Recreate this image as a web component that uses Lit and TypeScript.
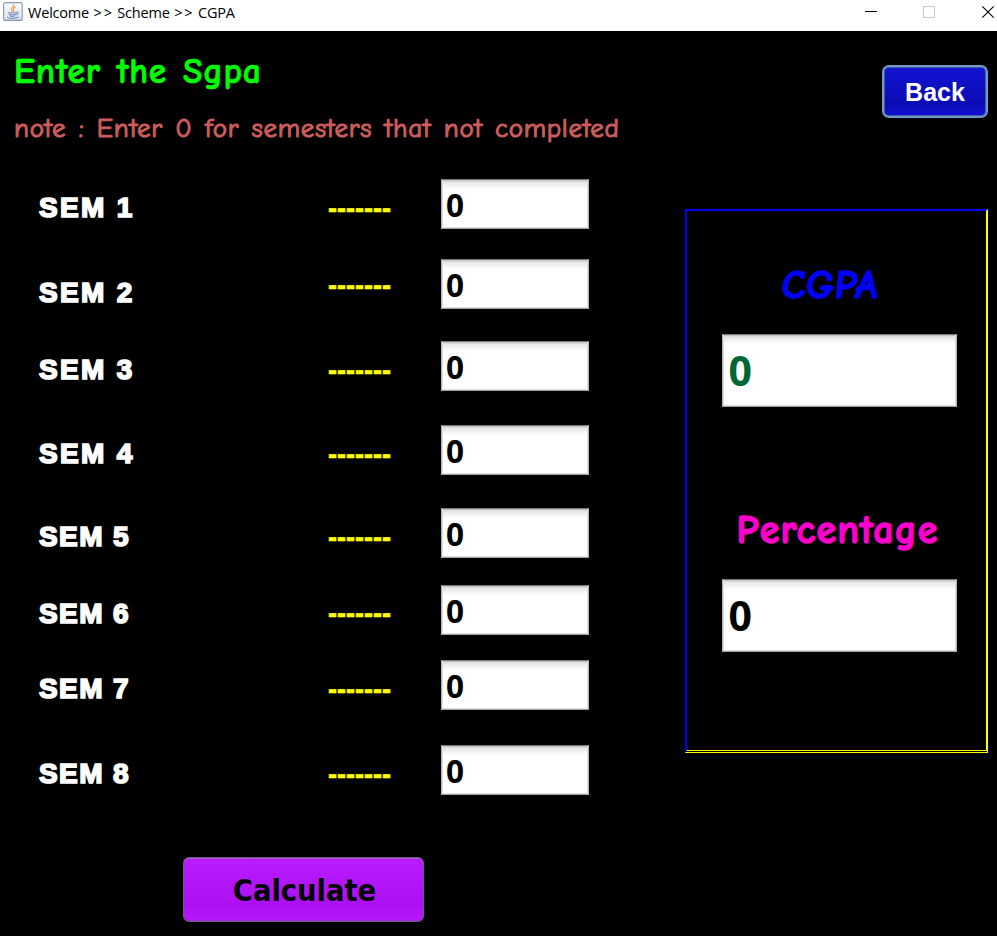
import { LitElement, html, css } from "lit";
import { customElement, property } from "lit/decorators.js";
import { styleMap } from "lit/directives/style-map.js";

interface SemesterRow {
  name: string;
  value: string;
  // Space above the row, then the drop of the label and the dashes within it.
  gap: number;
  label: number;
  dash: number;
  // Letter spacing of the label.
  tracking: number;
}

const ROWS: SemesterRow[] = [
  { name: "SEM 1", value: "0", gap: 0, label: 4, dash: 5, tracking: 2.3 },
  { name: "SEM 2", value: "0", gap: 30, label: 9, dash: 2, tracking: 2.3 },
  { name: "SEM 3", value: "0", gap: 32, label: 4, dash: 5, tracking: 2.3 },
  { name: "SEM 4", value: "0", gap: 34, label: 4, dash: 5, tracking: 2.3 },
  { name: "SEM 5", value: "0", gap: 33, label: 4, dash: 5, tracking: 1.4 },
  { name: "SEM 6", value: "0", gap: 27, label: 4, dash: 4, tracking: 1.4 },
  { name: "SEM 7", value: "0", gap: 25, label: 4, dash: 5, tracking: 1.4 },
  { name: "SEM 8", value: "0", gap: 35, label: 4, dash: 5, tracking: 1.4 },
];

@customElement("title-bar")
class TitleBar extends LitElement {
  static styles = css`
    :host {
      display: flex;
      height: 31px;
      background: #fff;
      color: #000;
    }
    .icon {
      margin: 2px 0 0 3px;
      width: 20px;
      height: 20px;
      flex: none;
    }
    .text {
      margin-left: 5px;
      flex: 1;
      font: 14.5px/26px "Open Sans", "Noto Sans", sans-serif;
      letter-spacing: -0.2px;
      white-space: pre;
    }
    .arrows {
      margin-left: 1px;
      letter-spacing: 1.8px;
    }
    .controls {
      width: 147px;
      height: 31px;
      flex: none;
    }
  `;

  render() {
    return html`
      <svg class="icon" viewBox="0 0 20 20">
        <defs>
          <linearGradient id="tile" x1="0" y1="0" x2="0" y2="1">
            <stop offset="0" stop-color="#fdfdfe" />
            <stop offset="1" stop-color="#d9dfe8" />
          </linearGradient>
        </defs>
        <rect x="0.6" y="0.6" width="18.6" height="17.8" rx="2" fill="url(#tile)" stroke="#8699b2" stroke-width="1.1" />
        <path d="M10.6 2.6c1.2 2-3.2 3-2.3 5 .3.8 1 1.2 1.1 2.2M12.4 5c-2.2 1-2.6 2-1.7 3.2.5.7.2 1.2-.3 1.7" fill="none" stroke="#ee9a55" stroke-width="1.2" stroke-linecap="round" />
        <path d="M5.6 10.4c1.5.8 6 .8 7.6 0M6.2 12.3c1.6.7 4.8.7 6.4 0M7 14c1.4.5 3.4.5 4.8 0M13.2 10.3c2.4-.5 2.5 1.7.1 2.5M4.4 15.4c2 1.4 8.5 1.3 10.8-.1" fill="none" stroke="#6d93b6" stroke-width="1.1" stroke-linecap="round" />
      </svg>
      <div class="text">Welcome <span class="arrows">&gt;&gt;</span> Scheme <span class="arrows">&gt;&gt;</span> CGPA</div>
      <svg class="controls" viewBox="0 0 147 31">
        <rect x="15" y="11" width="12" height="1" fill="#000" />
        <rect x="73.5" y="6.5" width="11" height="11" fill="none" stroke="#c9c9c9" />
        <path d="M132.3 6.3l11.4 11.4M143.7 6.3l-11.4 11.4" stroke="#000" stroke-width="1.1" />
      </svg>
    `;
  }
}

@customElement("number-field")
class NumberField extends LitElement {
  @property() value = "0";

  static styles = css`
    :host {
      display: flex;
      align-items: center;
      box-sizing: border-box;
      border: 1px solid #b4b4b4;
      border-top-color: #7c7c7c;
      border-bottom-color: #a4a4a4;
      background: linear-gradient(#b4b4b4 0, #cfcfcf 1px, #e6e6e6 2px, #ececec 4px, #f7f7f7 7px, #fff 9px);
      box-shadow: inset 1px 0 #dedede, inset -1px 0 #dedede, inset 0 -1px #dcdcdc;
      font-family: "Noto Sans", "Open Sans", sans-serif;
      font-weight: 700;
    }
  `;

  render() {
    return html`<span>${this.value}</span>`;
  }
}

@customElement("app-root")
class AppRoot extends LitElement {
  static styles = css`
    :host {
      display: block;
      width: 997px;
      height: 936px;
      overflow: hidden;
      background: #000;
    }
    .body {
      display: grid;
      grid-template-columns: 685px 303px;
      height: 905px;
    }
    .casual {
      font-family: "Comic Sans MS", "Comic Neue", Inter, sans-serif;
      font-feature-settings: "cv11" 1;
      font-weight: 700;
      white-space: pre;
    }
    .heading {
      margin: 21px 0 0 14px;
      height: 40px;
      font-size: 35.5px;
      line-height: 40px;
      color: #00ff00;
      letter-spacing: 0.8px;
      word-spacing: 2.5px;
      -webkit-text-stroke: 0.7px;
    }
    .note {
      margin: 22px 0 0 14px;
      height: 30px;
      font-size: 27px;
      line-height: 30px;
      font-weight: 400;
      color: #cd5c5c;
      letter-spacing: 0.7px;
      word-spacing: 2.8px;
      -webkit-text-stroke: 1.1px;
    }
    .rows {
      margin: 35px 0 0 39px;
    }
    .row {
      display: grid;
      grid-template-columns: 289px 113px 148px;
      height: 50px;
    }
    .name {
      height: 50px;
      font: 700 28px/50px "Liberation Sans", Arial, sans-serif;
      color: #fff;
      -webkit-text-stroke: 1.7px #fff;
      white-space: pre;
    }
    .dash {
      height: 50px;
      font: 700 27px/50px "Liberation Sans", Arial, sans-serif;
      color: #ff0;
      -webkit-text-stroke: 0.6px #ff0;
    }
    .row number-field {
      height: 50px;
      padding: 2px 0 0 4px;
      font-size: 31.5px;
      line-height: 46px;
    }
    button {
      display: block;
      padding: 0;
      box-sizing: border-box;
    }
    .calculate {
      margin: 62px 0 0 183px;
      width: 241px;
      height: 65px;
      padding: 2px 0 0 2px;
      border: 1px solid #6d5a7c;
      border-radius: 6px;
      background: linear-gradient(#b91cff, #ac10f2 75%, #b818ff);
      box-shadow: inset 0 1px #a65bd0, inset 0 -1px #9a2bd0;
      font: 700 30.5px/62px "DejaVu Sans Condensed", "DejaVu Sans", sans-serif;
      font-stretch: condensed;
      color: #000;
    }
    .back {
      margin: 34px 0 0 197px;
      width: 106px;
      height: 53px;
      border: 2px solid #6c9bc6;
      border-radius: 7px;
      background: linear-gradient(#1414d4, #0b0bb4 75%, #1010d8);
      box-shadow: inset 0 0 0 1px #4b5b9c;
      font: 700 25px/50px "Liberation Sans", Arial, sans-serif;
      color: #fff;
    }
    .panel {
      display: flex;
      flex-direction: column;
      align-items: center;
      box-sizing: border-box;
      margin-top: 91px;
      width: 303px;
      height: 544px;
      border: 2px solid;
      border-color: #00f #ff0 #ff0 #00f;
      border-bottom: 3px double #ff0;
    }
    .result {
      height: 50px;
      font-size: 40px;
      line-height: 50px;
      -webkit-text-stroke: 1.3px;
    }
    .cgpa {
      margin: 49px 12px 0 0;
      color: #00f;
      letter-spacing: 0.4px;
      transform: skewX(-5deg);
    }
    .percentage {
      margin: 98px 0 0 2px;
      color: #ff00cc;
      letter-spacing: 1.1px;
    }
    .panel number-field {
      margin-left: 5px;
      width: 235px;
      height: 73px;
      padding-left: 6px;
      font-size: 41px;
      line-height: 71px;
    }
    .cgpa-value {
      margin-top: 24px;
      color: #006633;
    }
    .percentage-value {
      margin-top: 24px;
      color: #000;
    }
  `;

  private renderRow(row: SemesterRow) {
    return html`
      <div class="row" style=${styleMap({ marginTop: `${row.gap}px` })}>
        <div class="name" style=${styleMap({ marginTop: `${row.label}px`, letterSpacing: `${row.tracking}px` })}>${row.name}</div>
        <div class="dash" style=${styleMap({ marginTop: `${row.dash}px` })}>-------</div>
        <number-field .value=${row.value}></number-field>
      </div>
    `;
  }

  render() {
    return html`
      <title-bar></title-bar>
      <div class="body">
        <div>
          <div class="casual heading">Enter the Sgpa</div>
          <div class="casual note">note : Enter 0 for semesters that not completed</div>
          <div class="rows">${ROWS.map((row) => this.renderRow(row))}</div>
          <button class="calculate">Calculate</button>
        </div>
        <div>
          <button class="back">Back</button>
          <div class="panel">
            <div class="casual result cgpa">CGPA</div>
            <number-field class="cgpa-value"></number-field>
            <div class="casual result percentage">Percentage</div>
            <number-field class="percentage-value"></number-field>
          </div>
        </div>
      </div>
    `;
  }
}
